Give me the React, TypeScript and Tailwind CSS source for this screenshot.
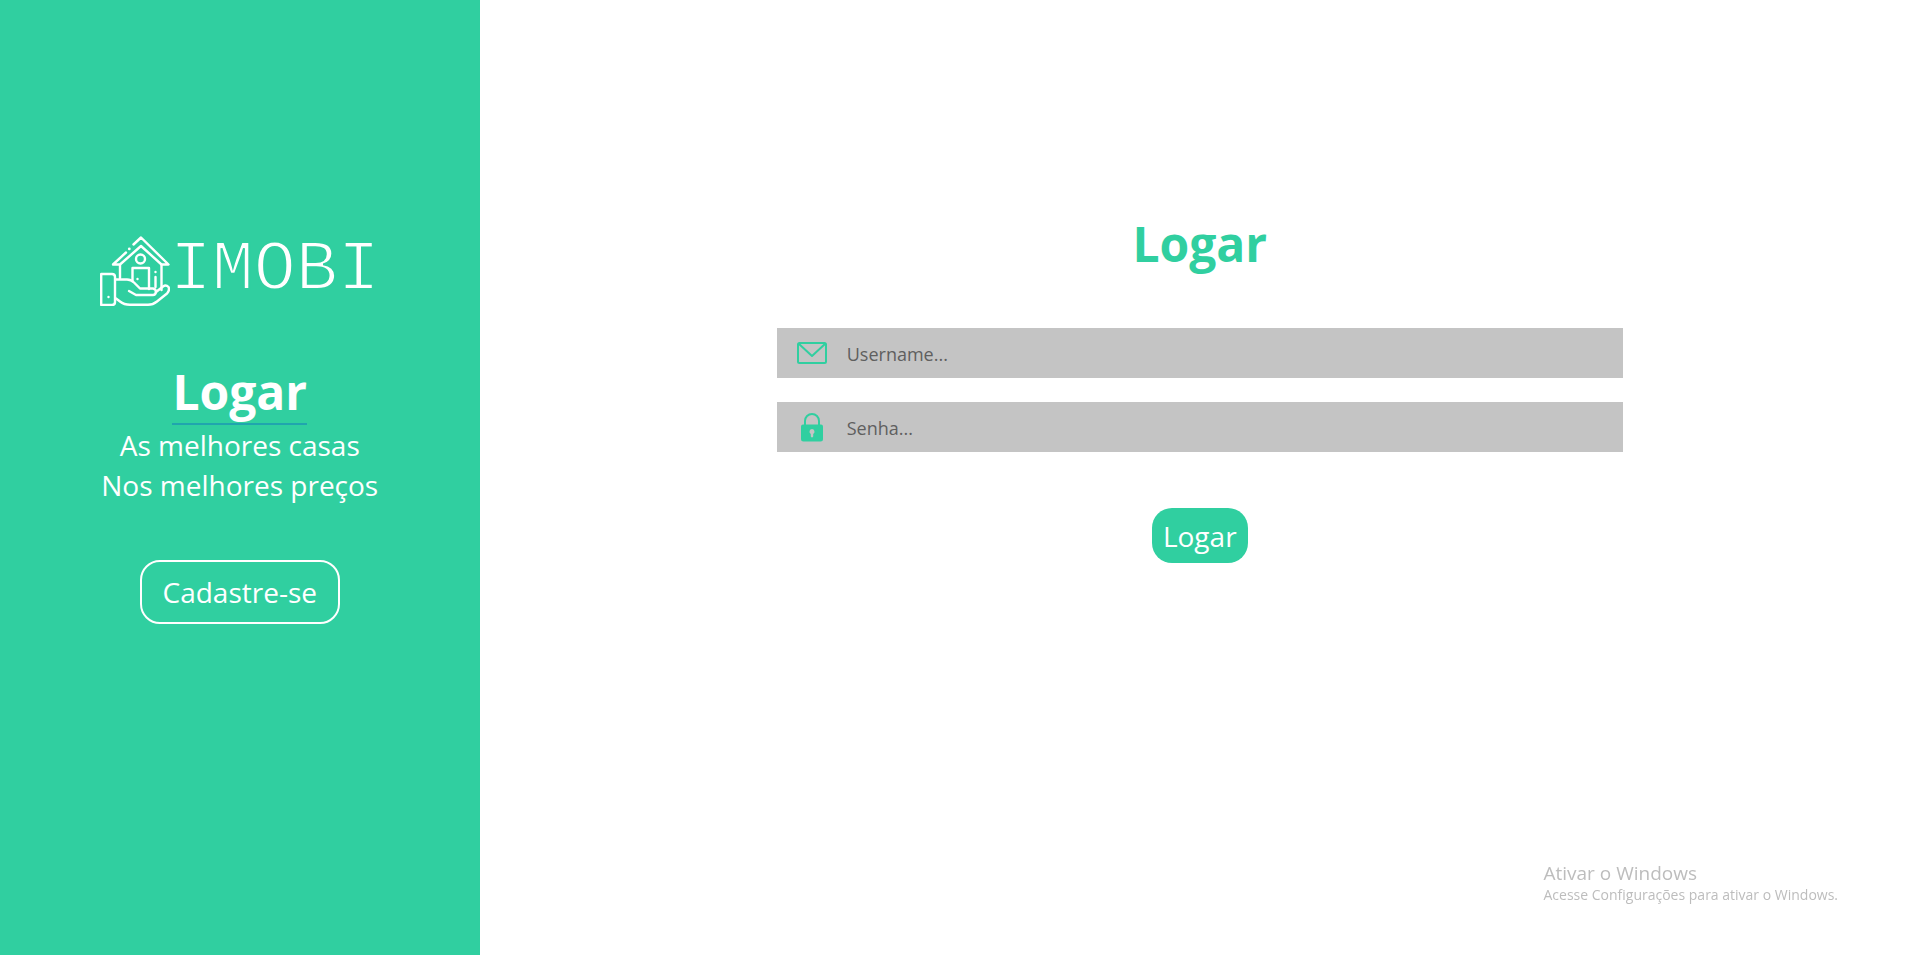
import type { ReactNode } from 'react';

function HouseInHandIcon() {
  return (
    <svg
      viewBox="0 0 70 70"
      className="size-[70px] shrink-0"
      fill="none"
      stroke="white"
      strokeWidth="2.4"
      strokeLinecap="round"
      strokeLinejoin="round"
      aria-hidden="true"
    >
      <path d="M33.500 8.500L41 1.500L68.500 28.500H61.500L41 10L20 28.500H13L26 16.500" />
      <path d="M29.300 12.800v.1" strokeWidth="2.800" />
      <circle cx="40.500" cy="23" r="4.500" />
      <path d="M20 29v13M61.500 29v25" />
      <path d="M32.500 45V32H49v21M37.500 43v.1" />
      <path d="M55.500 36v.1M55.500 41v10" />
      <path d="M1.200 38H12Q15 38 15 41V66Q15 69 12 69H1.200ZM8.500 61v.1" />
      <path d="M16 43.500H27Q31 43.500 34 46.500L40 52.500H53Q56 53 56 56Q55.500 59 53 59H36L29 55" />
      <path d="M56 56L63 50.500Q66 48.500 68.500 51Q70 54 67 57.500L57 65.500Q53 68.800 48 68.800H30Q24 68.800 20 65.500L16 62.500" />
    </svg>
  );
}

function EnvelopeIcon() {
  return (
    <svg viewBox="0 0 30 22" className="h-[22px] w-[30px]" fill="none" stroke="#30cfa0" strokeWidth="2" strokeLinejoin="round" aria-hidden="true">
      <rect x="1" y="1" width="28" height="20" rx="1.500" />
      <path d="M1.500 1.500L15 14L28.500 1.500" />
    </svg>
  );
}

function LockIcon() {
  return (
    <svg viewBox="0 0 22 29" className="h-[29px] w-[22px]" aria-hidden="true">
      <path d="M4 13V8a7 7 0 0 1 14 0v5" fill="none" stroke="#30cfa0" strokeWidth="2" />
      <path
        fill="#30cfa0"
        fillRule="evenodd"
        d="M2 11.500H20Q22 11.500 22 13.500V26Q22 28.500 19.500 28.500H2.500Q0 28.500 0 26V13.500Q0 11.500 2 11.500ZM11 16A2.700 2.700 0 0 0 9.800 21V23.500Q11 25.500 12.200 23.500V21A2.700 2.700 0 0 0 11 16Z"
      />
    </svg>
  );
}

function Field({ id, type, label, icon }: { id: string; type: string; label: string; icon: ReactNode }) {
  return (
    <div className="flex h-[50px] items-center bg-[#c4c4c4] pl-4">
      <label htmlFor={id} aria-label={label} className="flex w-[38px] shrink-0 justify-center">
        {icon}
      </label>
      <input
        id={id}
        type={type}
        placeholder={`${label}...`}
        className="ml-4 h-full min-w-0 flex-1 bg-transparent pt-0.5 text-lg text-[#333] outline-none placeholder:text-[#5f5f5f]"
      />
    </div>
  );
}

export default function App() {
  return (
    <div className="flex min-h-screen bg-white font-['Open_Sans','Noto_Sans',sans-serif]">
      <aside className="flex w-1/4 shrink-0 flex-col items-center bg-[#30cfa0] pt-[236px] text-center text-white">
        <div className="flex h-[70px] items-center">
          <HouseInHandIcon />
          <span className="font-['Liberation_Mono',monospace] text-[70px] leading-[60px] [-webkit-text-stroke:2px_#30cfa0]">
            IMOBI
          </span>
        </div>
        <h2 className="mt-[54px] border-b-2 border-[#20a5ae] text-5xl leading-[63px] font-bold">Logar</h2>
        <p className="text-[28px] leading-10">
          As melhores casas
          <br />
          Nos melhores preços
        </p>
        <a
          href="#cadastro"
          className="mt-[55px] flex h-16 w-[200px] items-center justify-center rounded-[20px] border-2 border-white text-[28px]"
        >
          Cadastre-se
        </a>
      </aside>
      <main className="min-w-0 flex-1 pt-[212px] pl-0.5">
        <form className="mx-auto flex w-[846px] max-w-full flex-col" onSubmit={(event) => event.preventDefault()}>
          <h1 className="text-center text-5xl leading-[64px] font-bold text-[#30cfa0]">Logar</h1>
          <div className="mt-[52px] flex flex-col gap-6">
            <Field id="username" type="text" label="Username" icon={<EnvelopeIcon />} />
            <Field id="senha" type="password" label="Senha" icon={<LockIcon />} />
          </div>
          <button type="submit" className="mt-14 h-[55px] w-24 self-center rounded-[20px] bg-[#30cfa0] text-[28px] text-white">
            Logar
          </button>
        </form>
      </main>
      <div className="pointer-events-none fixed right-20 bottom-[50px] text-[#bdbdbd]">
        <p className="text-[19px] leading-6">Ativar o Windows</p>
        <p className="text-sm leading-5">Acesse Configurações para ativar o Windows.</p>
      </div>
    </div>
  );
}
